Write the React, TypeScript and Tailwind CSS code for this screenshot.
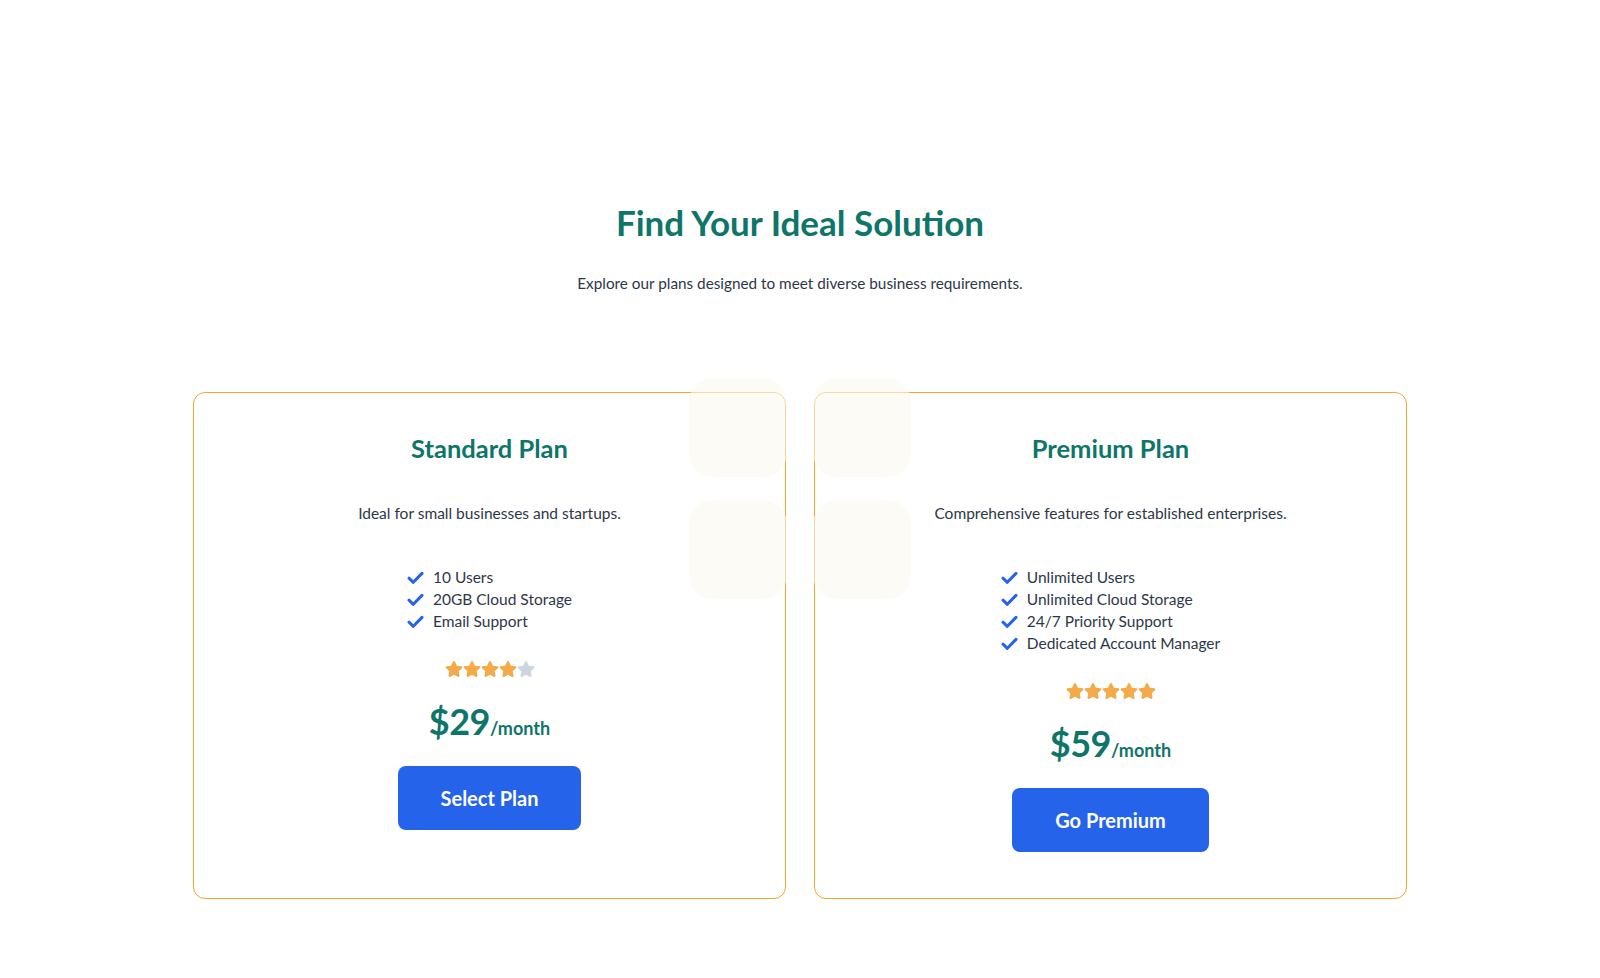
import React from "react";
import { FaStar } from "react-icons/fa";

const Check = () => (
  <svg width="17" height="14" viewBox="0 0 17 14" className="shrink-0">
    <path d="M2 7.2 L6.3 11.3 L15 2.4" fill="none" stroke="#2563eb" strokeWidth="3" strokeLinecap="round" strokeLinejoin="round" />
  </svg>
);

type Plan = {
  title: string;
  desc: string;
  features: string[];
  stars: number;
  price: string;
  cta: string;
};

const plans: Plan[] = [
  {
    title: "Standard Plan",
    desc: "Ideal for small businesses and startups.",
    features: ["10 Users", "20GB Cloud Storage", "Email Support"],
    stars: 4,
    price: "$29",
    cta: "Select Plan",
  },
  {
    title: "Premium Plan",
    desc: "Comprehensive features for established enterprises.",
    features: ["Unlimited Users", "Unlimited Cloud Storage", "24/7 Priority Support", "Dedicated Account Manager"],
    stars: 5,
    price: "$59",
    cta: "Go Premium",
  },
];

function Card({ p }: { p: Plan }) {
  return (
    <div className="relative z-10 flex flex-col items-center rounded-[12px] border border-[#f4a52e] px-10 pt-[39px] pb-[46px] text-center">
      <h2 className="text-[25.5px] leading-8 font-bold text-[#0e7569]">{p.title}</h2>
      <p className="mt-[37px] text-[15.5px] leading-6 text-[#2d3748]">{p.desc}</p>
      <ul className="mt-[42px] flex flex-col text-left">
        {p.features.map((f) => (
          <li key={f} className="flex h-[22px] items-center gap-[9px] text-[15.5px] text-[#2d3748]">
            <Check />
            <span>{f}</span>
          </li>
        ))}
      </ul>
      <div className="mt-[27px] flex h-[18px] items-center">
        {[0, 1, 2, 3, 4].map((i) => (
          <FaStar key={i} size={18} color={i < p.stars ? "#f3ab4a" : "#cdd6e0"} />
        ))}
      </div>
      <div className="mt-[23px] flex items-baseline leading-10 text-[#0e7569]">
        <span className="text-[36px] font-bold tracking-[-0.5px]">{p.price}</span>
        <span className="text-[18px] font-bold">/month</span>
      </div>
      <button className="mt-[18px] h-[64px] rounded-[8px] bg-[#2563eb] px-[43px] text-[20px] font-bold text-white">
        {p.cta}
      </button>
    </div>
  );
}

export default function App() {
  return (
    <div className="min-h-[978px] w-full bg-white" style={{ fontFamily: "Lato, 'Noto Sans', sans-serif" }}>
      <div className="mx-auto max-w-[1214px] pt-[202px] pb-20">
        <div className="flex flex-col items-center">
          <h1 className="text-[35px] leading-10 font-bold text-[#0e7569]">Find Your Ideal Solution</h1>
          <p className="mt-[29px] text-[15.3px] leading-6 text-[#2d3748]">
            Explore our plans designed to meet diverse business requirements.
          </p>
        </div>
        <div className="relative mt-[97px] grid grid-cols-2 gap-7">
          <div className="pointer-events-none absolute top-[-14px] left-1/2 z-20 grid -translate-x-1/2 grid-cols-[98px_98px] gap-x-[26px] gap-y-[23px]">
            <div className="h-[99px] rounded-3xl bg-[#fbf9f0]/60" />
            <div className="h-[99px] rounded-3xl bg-[#fbf9f0]/60" />
            <div className="h-[99px] rounded-3xl bg-[#fbf9f0]/60" />
            <div className="h-[99px] rounded-3xl bg-[#fbf9f0]/60" />
          </div>
          {plans.map((p) => (
            <Card key={p.title} p={p} />
          ))}
        </div>
      </div>
    </div>
  );
}
